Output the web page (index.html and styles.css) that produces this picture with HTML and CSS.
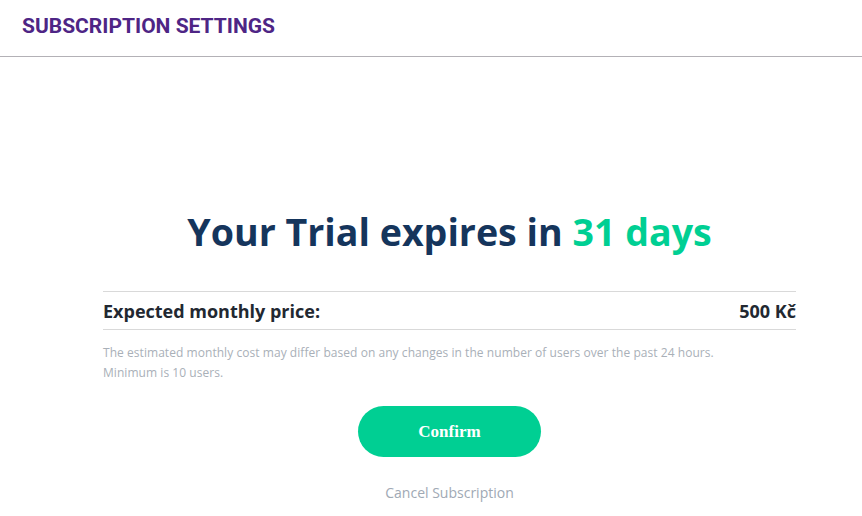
FILE: index.html
```html
<!DOCTYPE html>
<html>
<head>
<meta charset="utf-8">
<link rel="stylesheet" href="styles.css">
</head>
<body>
<header class="topbar">
  <h1 class="page-title">SUBSCRIPTION SETTINGS</h1>
</header>
<main class="content">
  <h2 class="trial">Your Trial expires in <span class="days">31 days</span></h2>
  <div class="price-row">
    <span class="price-label">Expected monthly price:</span>
    <span class="price-value">500 Kč</span>
  </div>
  <p class="note">The estimated monthly cost may differ based on any changes in the number of users over the past 24 hours.<br>Minimum is 10 users.</p>
  <div class="actions">
    <button class="confirm">Confirm</button>
    <a class="cancel">Cancel Subscription</a>
  </div>
</main>
</body>
</html>
```
FILE: styles.css
```css
html, body {
  margin: 0;
  padding: 0;
  background: #fff;
}
body {
  font-family: "Open Sans", sans-serif;
}
.topbar {
  height: 56px;
  border-bottom: 1px solid #b3b1b6;
  box-sizing: content-box;
  display: flex;
  align-items: center;
  padding-left: 22px;
}
.page-title {
  margin: 0;
  font-family: Roboto, sans-serif;
  font-weight: 700;
  font-size: 21px;
  color: #4e2585;
  position: relative;
  top: -2px;
}
.content {
  width: 693px;
  margin-left: 103px;
  padding-top: 149px;
  display: flex;
  flex-direction: column;
}
.trial {
  margin: 0;
  text-align: center;
  font-size: 37.6px;
  font-weight: 700;
  color: #15355c;
  line-height: 52px;
}
.days {
  color: #00cf93;
}
.price-row {
  margin-top: 33px;
  border-top: 1px solid #d9d9d9;
  border-bottom: 1px solid #d9d9d9;
  height: 37px;
  display: flex;
  justify-content: space-between;
  align-items: center;
  font-size: 18px;
  font-weight: 700;
  color: #222831;
}
.note {
  margin: 13px 0 0;
  font-size: 12px;
  letter-spacing: 0.05px;
  line-height: 20px;
  color: #a9b0b8;
}
.actions {
  display: flex;
  flex-direction: column;
  align-items: center;
  margin-top: 23px;
}
.confirm {
  width: 183px;
  height: 51px;
  border: none;
  border-radius: 26px;
  background: #00cf93;
  color: #fff;
  font-family: "Liberation Serif", serif;
  font-weight: 700;
  font-size: 17px;
  cursor: pointer;
}
.cancel {
  margin-top: 26px;
  font-size: 14px;
  color: #a0a9b4;
  cursor: pointer;
}
```
